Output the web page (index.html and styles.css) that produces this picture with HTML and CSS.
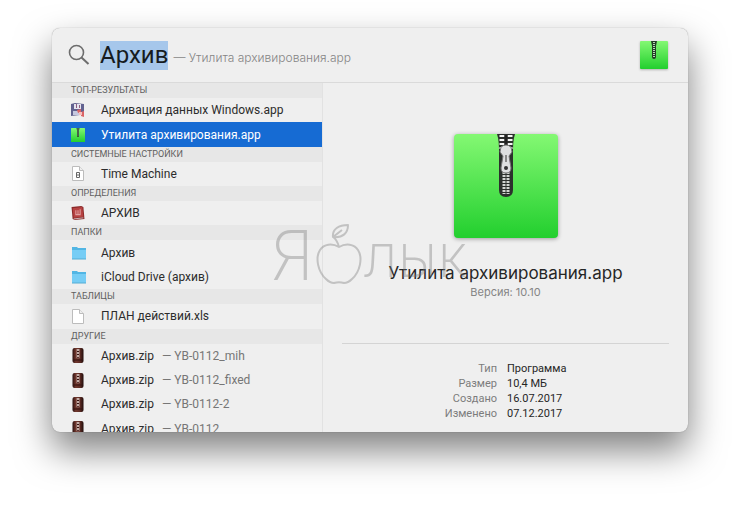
FILE: index.html
```html
<!DOCTYPE html>
<html lang="ru">
<head>
<meta charset="utf-8">
<title>Spotlight</title>
<link rel="stylesheet" href="styles.css">
</head>
<body>
<svg class="defs" aria-hidden="true">
  <defs>
    <linearGradient id="green" x1="0" y1="0" x2="0" y2="1"><stop offset="0" stop-color="#84f873"/><stop offset="1" stop-color="#22cf2e"/></linearGradient>
    <linearGradient id="brown" x1="0" y1="0" x2="1" y2="0"><stop offset="0" stop-color="#2b1110"/><stop offset=".3" stop-color="#70372d"/><stop offset=".7" stop-color="#5a2a23"/><stop offset="1" stop-color="#200c0b"/></linearGradient>
  </defs>
  <symbol id="archive" viewBox="0 0 104 104">
    <rect width="104" height="104" rx="4" fill="url(#green)"/>
    <path d="M43 0h18c-2 6-2 12-2 20v36q0 7-7 7t-7-7V20c0-8 0-14-2-20z" fill="#2c302d"/>
    <path d="M48 1v15M56 1v15" stroke="#f4f4f4" stroke-width="5" stroke-dasharray="2 2"/>
    <path d="M52 1v14" stroke="#222" stroke-width="3"/>
    <path d="M50 38v22M54 38v22" stroke="#d2d5d2" stroke-width="3" stroke-dasharray="2 1"/>
    <path d="M47 13q5-4 10 0l1 5-3 4 2 12q0 5-5 5t-5-5l2-12-3-4z" fill="#dedfe0" stroke="#777" stroke-width="1"/>
    <path d="M52 21v7" stroke="#888" stroke-width="2"/><circle cx="52" cy="34" r="2" fill="#333"/>
  </symbol>
  <symbol id="archive-small" viewBox="0 0 28 28">
    <rect width="28" height="28" rx="1" fill="url(#green)"/>
    <path d="M11 0h6l-1 5v11q0 2-2 2t-2-2V5z" fill="#243d27"/>
    <path d="M14 1v16" stroke="#b8d9b8" stroke-width="2" stroke-dasharray="1 1"/>
  </symbol>
  <symbol id="folder" viewBox="0 0 16 14">
    <path d="M1 1h5l1 1h8v11H1z" fill="#52b6e4"/><path d="M1 4h14v9H1z" fill="#76cdf5"/><path d="M1 13h14" stroke="#55add4"/>
  </symbol>
  <symbol id="page" viewBox="0 0 12 15">
    <path d="M.5.500h7l4 4v10H.5z" fill="#fff" stroke="#bcbcbc"/><path d="M7.500.500v4h4" fill="#eee" stroke="#bcbcbc"/>
  </symbol>
  <symbol id="zip" viewBox="0 0 11 15">
    <rect width="11" height="15" rx="2" fill="url(#brown)"/><path d="M4 1v9h3V1" fill="#35110e" stroke="#a88078" stroke-width=".7"/><path d="M5.500 1v9" stroke="#f0dfd8" stroke-width="1.500" stroke-dasharray="2 1"/><path d="M1 12h9" stroke="#32100e"/>
  </symbol>
  <symbol id="windows" viewBox="0 0 14 14">
    <path d="M0 1l4-1 9 1v10l-4 1-9 1z" fill="#62628f"/><path d="M3 1h7v5H3z" fill="#e5e4ef"/><path d="M5 1h1v4H5zM8 2h1v3H8z" fill="#8c5f82"/><path d="M2 8h6v4H2z" fill="#c6c8df"/><path d="M6 7l4-1v3l3-1v6l-3-1V9L7 10z" fill="#db6465"/><path d="M8 9h3v3H8z" fill="#f6bfbd"/>
  </symbol>
  <symbol id="book" viewBox="0 0 12 13">
    <path d="M0 1l9-1 2 1 1 11-9 1-2-1z" fill="#8a2929"/><path d="M1 2l9-1 1 9-9 1z" fill="#b64242"/><path d="M4 4v4h4V3M6 4v4" fill="none" stroke="#e0a0a0"/><path d="M2 12l9-1" stroke="#ddd" stroke-width=".7"/>
  </symbol>
</svg>

<main class="window">
  <header class="search">
    <svg class="lens" viewBox="0 0 22 22" aria-hidden="true"><circle cx="8.500" cy="8.500" r="7" fill="none" stroke="#6d6d6d" stroke-width="1.600"/><path d="M13.500 13.500l7 6.500" stroke="#6d6d6d" stroke-width="2"/></svg>
    <input class="query" type="text" value="Архив" aria-label="Поиск">
    <span class="completion">— Утилита архивирования.app</span>
    <svg class="top-icon" aria-hidden="true"><use href="#archive-small"/></svg>
  </header>

  <div class="body">
    <nav class="results">
      <div class="list">
        <h2>Топ-результаты</h2>
        <button><svg class="icon"><use href="#windows"/></svg>Архивация данных Windows.app</button>
        <button class="selected"><svg class="icon"><use href="#archive-small"/></svg>Утилита архивирования.app</button>
        <h2>Системные настройки</h2>
        <button><svg class="icon page"><use href="#page"/><path d="M5.500 6.500h3v5h-3zM7 8v2" fill="none" stroke="#666"/></svg>Time Machine</button>
        <h2>Определения</h2>
        <button><svg class="icon"><use href="#book"/></svg>АРХИВ</button>
        <h2>Папки</h2>
        <button><svg class="icon folder"><use href="#folder"/></svg>Архив</button>
        <button><svg class="icon folder"><use href="#folder"/></svg>iCloud Drive (архив)</button>
        <h2>Таблицы</h2>
        <button><svg class="icon page"><use href="#page"/></svg>ПЛАН действий.xls</button>
        <h2>Другие</h2>
        <button><svg class="icon page"><use href="#zip"/></svg>Архив.zip <span class="place">— YB-0112_mih</span></button>
        <button><svg class="icon page"><use href="#zip"/></svg>Архив.zip <span class="place">— YB-0112_fixed</span></button>
        <button><svg class="icon page"><use href="#zip"/></svg>Архив.zip <span class="place">— YB-0112-2</span></button>
        <button><svg class="icon page"><use href="#zip"/></svg>Архив.zip <span class="place">— YB-0112</span></button>
      </div>
    </nav>

    <section class="preview">
      <svg class="app-icon" aria-hidden="true"><use href="#archive"/></svg>
      <h1>Утилита архивирования.app</h1>
      <p class="version">Версия: 10.10</p>
      <dl class="meta">
        <dt>Тип</dt><dd>Программа</dd>
        <dt>Размер</dt><dd>10,4 МБ</dd>
        <dt>Создано</dt><dd>16.07.2017</dd>
        <dt>Изменено</dt><dd>07.12.2017</dd>
      </dl>
    </section>
  </div>

  <div class="watermark">
    <span class="initial">Я</span>
    <svg viewBox="0 0 46 62" aria-hidden="true"><path d="M23 24C16 20 8 21 4 27c-5 8-2 22 6 29 3 3 6 4 8 4 3-1 7-1 10 0 2 0 5-1 8-4 8-7 11-21 6-29-4-6-12-7-19-3zM23 24C22 20 20 16 17 14c-1-8 6-12 15-12 0 8-5 13-15 12l9-7" fill="none" stroke="currentColor" stroke-width="2" stroke-linejoin="round"/></svg>
    <span class="rest">лык</span>
  </div>
</main>
</body>
</html>
```
FILE: styles.css
```css
* { box-sizing: border-box; }

body {
  min-height: 100vh;
  margin: 0;
  padding: 28px 52px;
  background: #fff;
  color: #262626;
  font-family: Inter, "Liberation Sans", sans-serif;
  font-size: 12px;
}

h1, h2, p, dl, dd { margin: 0; }

.defs { position: absolute; width: 0; height: 0; }

.window {
  position: relative;
  border-radius: 8px;
  background: #efefef;
  box-shadow: 0 0 1px rgba(0, 0, 0, .4), 0 18px 36px rgba(0, 0, 0, .5);
}

.search {
  display: flex;
  align-items: center;
  height: 55px;
  padding: 0 20px 0 16px;
  border-bottom: 1px solid #dadada;
}

.lens { width: 22px; height: 22px; margin-right: 10px; }

.query {
  field-sizing: content;
  height: 29px;
  padding: 0;
  border: 0;
  outline: 0;
  background: #a6c7eb;
  color: #161b20;
  font: 400 24px Roboto, "Liberation Sans", sans-serif;
}

.completion { margin: 4px 0 0 5px; color: #858585; font-weight: 300; }

.top-icon { width: 28px; height: 28px; margin-left: auto; filter: drop-shadow(0 1px 1px rgba(0, 0, 0, .25)); }

.body { display: grid; grid-template-columns: 271px 1fr; }

.results {
  contain: size;
  overflow: hidden;
  border-right: 1px solid #e2e2e2;
  border-bottom-left-radius: 8px;
  font-family: Roboto, "Liberation Sans", sans-serif;
}

/* The list runs past the window's lower edge, cutting its last row. */
.list {
  display: flex;
  flex-direction: column;
  height: calc(100% + 9px);
}

.results h2 {
  flex: none;
  height: 15px;
  padding-left: 19px;
  background: #e7e7e7;
  color: #606060;
  font-size: 9px;
  font-weight: 400;
  line-height: 14px;
  text-transform: uppercase;
}

.results button {
  display: flex;
  flex: 1 0 24px;
  align-items: center;
  padding: 0 0 0 19px;
  border: 0;
  background: none;
  color: #2c2c2c;
  font: inherit;
  text-align: left;
  white-space: nowrap;
}

.results .selected { background: #166bd3; color: #fff; }

.icon { flex: none; width: 14px; height: 14px; margin-right: 16px; }
.icon.page { height: 15px; }
.icon.folder { width: 16px; margin-right: 14px; }

.place { margin-left: 8px; color: #767676; }

.preview {
  display: flex;
  flex-direction: column;
  align-items: center;
  padding: 51px 19px 11px;
}

.app-icon { width: 104px; height: 104px; filter: drop-shadow(0 1px 2px rgba(0, 0, 0, .35)); }

.preview h1 { margin-top: 23px; font-size: 17px; font-weight: 400; line-height: 24px; }

.version { color: #858585; font-size: 11px; line-height: 14px; }

.meta {
  display: grid;
  grid-template-columns: 155px 1fr;
  column-gap: 10px;
  align-self: stretch;
  margin-top: 44px;
  padding-top: 17px;
  border-top: 1px solid #d4d4d4;
  font-family: Roboto, "Liberation Sans", sans-serif;
  font-size: 11px;
  line-height: 15px;
}

.meta dt { color: #7c7c7c; text-align: right; }

.watermark {
  position: absolute;
  top: 195px;
  left: 219px;
  display: flex;
  gap: 2px;
  align-items: flex-end;
  color: rgba(120, 120, 120, .38);
  font-weight: 200;
  line-height: 64px;
  pointer-events: none;
}

.watermark svg { width: 46px; height: 62px; margin-bottom: 2px; }
.initial { font-size: 69px; }
.rest { font-size: 60px; }
```
